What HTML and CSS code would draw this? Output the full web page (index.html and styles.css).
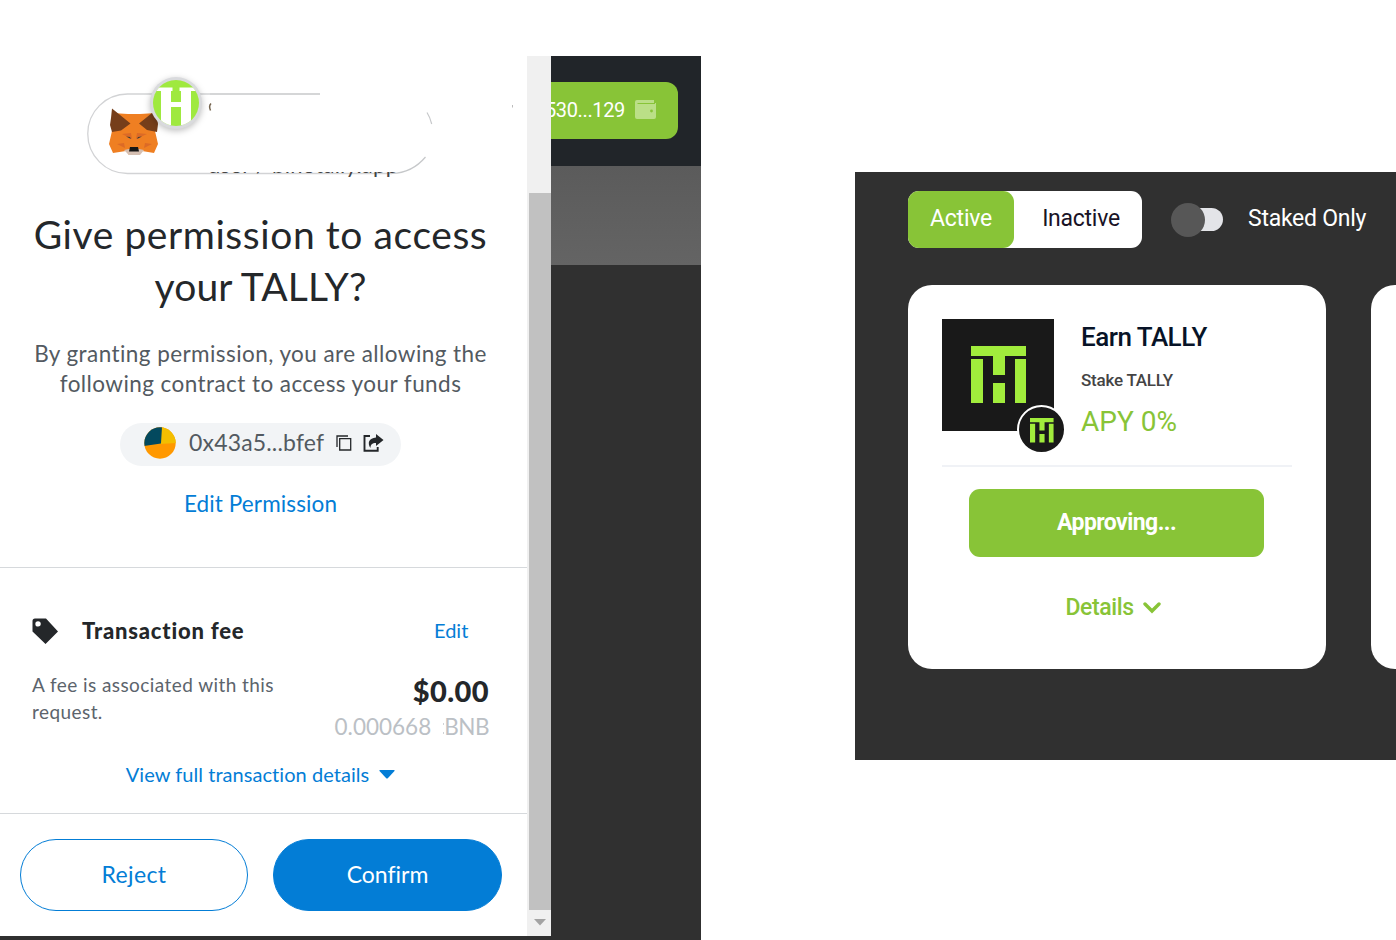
FILE: index.html
```html
<!DOCTYPE html>
<html lang="en">
<head>
<meta charset="utf-8">
<title>Give permission</title>
<link rel="stylesheet" href="styles.css">
</head>
<body>
<svg width="0" height="0" class="defs">
  <symbol id="th" viewBox="0 0 56 58"><path fill="#a1ec3c" d="M0 0h55v10H34v19H22V10H0zM0 13h12v44H0zM44 13h11v44H44zM22 37h12v20H22z"/></symbol>
</svg>
<main class="stage">
  <section class="wallet">
    <div class="popup">
      <div class="content">
        <header class="origin">
          <svg class="pill" width="440" height="110" viewBox="80 70 440 110">
            <path d="M320 94H127.500a39.750 39.750 0 0 0 0 79.500H392" fill="none" stroke="#d2d3d5" stroke-width="1.300"/>
            <path d="M210 94H320" stroke="#d2d3d5" stroke-width="1.600"/>
            <path d="M392 173.500Q412 173 425.500 157M427 112.500Q430 117 431.700 124" fill="none" stroke="#c6c8ca" stroke-width="1.200"/>
            <path d="M211 103.500q-2.500 2.500-.5 7" fill="none" stroke="#73634d" stroke-width="1.500"/>
            <path d="M512.500 105v2.500" stroke="#bbb" stroke-width="1"/>
            <path fill="#ef7f22" d="M112 113l16 1h12l16-1-1 18 3 13-4 9-12-2-3 4h-10l-3-4-13 2-4-9 3-13z"/>
            <path fill="#763e1a" d="M112 108.500l18.500 15-9.500 7-9 1.500-2-7 1-7zM157 109l-18 14.500 8 6.500 10 2 1-8-1-6z"/>
            <path fill="#dc6a26" d="M122 134l9-1 1 6zM147 134l-10-1-1 6zM117 144l7-1 1 5zM152 144l-7-1-1 5z"/>
            <path fill="#d5bfb2" d="M124 150l5-1h10l5 1-4 5h-11z"/>
            <path fill="#161616" d="M130 147h8l1 4.500h-10z"/>
            <path fill="#3b3938" d="M126 136.500l4 .5 1 2zM142 136.500l-4 .5-1 2z"/>
          </svg>
          <svg class="token" width="60" height="60" viewBox="0 0 60 60">
            <circle cx="30" cy="30" r="26" fill="#d9dadd"/>
            <clipPath id="tc"><circle cx="30" cy="30" r="23"/></clipPath>
            <g clip-path="url(#tc)"><path fill="#9fe93f" d="M5 5h50v50H5z"/><path fill="#fff" d="M10 14.500h16.500V18H25v11h10V18h-1.500v-3.500H51V18h-6v34H35V34H25v18H15V18h-5zM5 46l10 4v10H5zM45 50l9-4v14h-9z"/></g>
          </svg>
          <div class="origin-url"><span>user / binotally.app</span></div>
        </header>
        <h1 class="title"><span class="t1">Give permission to access</span><br><span class="t2">your TALLY?</span></h1>
        <p class="desc">By granting permission, you are allowing the<br>following contract to access your funds</p>
        <div class="address">
          <svg width="32" height="32" viewBox="0 0 32 32"><clipPath id="ac"><circle cx="16" cy="16" r="15.700"/></clipPath><g clip-path="url(#ac)"><path fill="#ff9800" d="M0 0h32v32H0z"/><path fill="#f3be00" d="M17 0h15v16l-16 1z"/><path fill="#03495e" d="M0 0h18l-1 16.500L0 19z"/><path fill="#5c6e7c" d="M32 21v11h-6z"/></g></svg>
          <span class="addr-text">0x43a5...bfef</span>
          <svg class="copy" width="16" height="16" viewBox="0 0 16 16" fill="none" stroke="#24272a" stroke-width="1.300"><path d="M1 12V1h11"/><path d="M3.700 3.700h11V15h-11z"/></svg>
          <svg class="share" width="21" height="18" viewBox="0 0 21 18"><path d="M7 2H1.500v14.700h13.200V13" fill="none" stroke="#24272a" stroke-width="1.900"/><path d="M13 0l7.500 6-7.500 6V9c-4 0-5.500 1.500-5.500 5C4 9 6 4 13 3.500z" fill="#24272a"/></svg>
        </div>
        <a class="link edit-perm">Edit Permission</a>
        <section class="fee">
          <div class="fee-head">
            <svg width="27" height="27" viewBox="0 0 27 27"><path fill="#24272a" fill-rule="evenodd" d="M3 .5h11L26 13.500 13.500 26 .5 13.500V3Q.5.500 3 .5zM6 3.200a2.700 2.700 0 1 0 .1 5.400A2.700 2.700 0 0 0 6 3.200z"/></svg>
            <h2>Transaction fee</h2>
            <a class="link">Edit</a>
          </div>
          <div class="fee-body">
            <p>A fee is associated with this<br>request.</p>
            <div class="amounts"><strong>$0.00</strong><span class="crypto"><span>0.000668</span><span class="bnb">BNB</span></span></div>
          </div>
          <a class="link details"><span>View full transaction details</span><svg width="16" height="9" viewBox="0 0 16 9"><path fill="#037dd6" d="M1 0h14q1 0 .5 1L9 8q-1 1-2 0L.5 1Q0 0 1 0z"/></svg></a>
        </section>
        <footer class="actions">
          <button class="btn reject">Reject</button>
          <button class="btn primary">Confirm</button>
        </footer>
      </div>
      <div class="scrollbar"><div class="thumb"></div><svg width="12" height="7" viewBox="0 0 12 7"><path fill="#a3a3a3" d="M0 0h12L6 6.500z"/></svg></div>
    </div>
    <aside class="backdrop">
      <div class="topbar"><div class="account"><span>530...129</span>
        <svg width="21" height="19" viewBox="0 0 21 19"><path fill="#bbdf87" d="M2 0h17v3h2v14q0 2-2 2H2q-2 0-2-2V2Q0 0 2 0z"/><path d="M2.500 3.500H20" stroke="#88c437"/><circle cx="16.500" cy="11" r="1.400" fill="#88c437"/></svg></div></div>
      <div class="band"></div>
    </aside>
  </section>
  <section class="farm">
    <div class="controls">
      <div class="tabs"><span class="tab active">Active</span><span class="tab">Inactive</span></div>
      <div class="switch"></div>
      <span class="staked">Staked Only</span>
    </div>
    <div class="cards">
      <article class="card">
        <div class="card-head">
          <div class="logo"><svg width="56" height="58"><use href="#th"/></svg><div class="badge"><svg width="24" height="25"><use href="#th"/></svg></div></div>
          <div class="info"><h3>Earn TALLY</h3><p>Stake TALLY</p><div class="apy">APY 0%</div></div>
        </div>
        <button class="approve">Approving...</button>
        <a class="more"><span>Details</span><svg width="18" height="12" viewBox="0 0 18 12"><path d="M2 2l7 7 7-7" fill="none" stroke="#88c437" stroke-width="3.400" stroke-linecap="round"/></svg></a>
      </article>
      <article class="card"></article>
    </div>
  </section>
</main>
</body>
</html>
```
FILE: styles.css
```css
* { box-sizing: border-box; }
body { margin: 0; background: #fff; font-family: Lato, sans-serif; font-variant-ligatures: none; color: #24272a; }
h1, h2, h3, p { margin: 0; font-weight: 400; }
button { border: 0; padding: 0; font: inherit; letter-spacing: inherit; }
svg { display: block; flex: none; }
.defs { position: absolute; }
.stage { width: 1396px; height: 940px; display: flex; justify-content: space-between; overflow: hidden; }

.wallet { width: 701px; height: 884px; margin-top: 56px; display: flex; background: #303030; }
.popup { width: 551px; height: 880px; display: flex; background: #fff; }
.content { width: 527px; display: flex; flex-direction: column; }
.origin { height: 152px; position: relative; }
.pill { position: absolute; left: 80px; top: 14px; }
.token { position: absolute; left: 146px; top: 17px; filter: drop-shadow(0 2px 3px rgba(0, 0, 0, .25)); }
.origin-url { position: absolute; left: 208px; top: 116px; width: 200px; height: 7px; overflow: hidden; display: flex; align-items: flex-end; font-size: 22px; line-height: 28px; letter-spacing: .27px; white-space: nowrap; color: #444; }
.title { text-align: center; font-size: 39px; line-height: 52px; width: 521px; white-space: nowrap; }
.t1 { letter-spacing: .58px; }
.t2 { letter-spacing: .15px; }
.desc { text-align: center; font-size: 22.500px; line-height: 30px; letter-spacing: .43px; width: 521px; margin-top: 27px; color: #535a61; white-space: nowrap; }
.address { width: 281px; height: 43px; margin: 24px 0 0 120px; padding-left: 24px; border-radius: 22px; background: #f2f4f6; display: flex; align-items: center; color: #535a61; font-size: 23px; letter-spacing: .17px; white-space: nowrap; }
.address svg { margin-top: -3px; }
.addr-text { width: 147px; padding-left: 13px; line-height: 26px; margin-top: -5px; }
.copy { margin-left: 13px; }
.share { margin-left: 11px; }
.link { color: #037dd6; }
.edit-perm { width: 521px; height: 101px; padding-top: 24px; text-align: center; font-size: 22.500px; line-height: 28px; letter-spacing: .12px; }
.fee { height: 246px; border-top: 1px solid #d6d9dc; padding-top: 49px; }
.fee-head { height: 28px; display: flex; align-items: center; padding-left: 32px; }
.fee-head h2 { width: 352px; padding-left: 23px; font-size: 22px; font-weight: 900; line-height: 28px; letter-spacing: .8px; }
.fee-head .link { margin: -3px 0 0 23px; font-size: 20px; }
.fee-body { display: flex; justify-content: space-between; padding: 26px 38px 0 32px; height: 115px; }
.fee-body p { font-size: 19px; line-height: 27px; letter-spacing: .43px; color: #5c646c; }
.amounts { text-align: right; padding-top: 1px; }
.amounts strong { display: block; font-size: 29px; line-height: 38px; font-weight: 900; letter-spacing: .4px; }
.crypto { display: flex; gap: 13px; font-size: 22.500px; line-height: 34px; color: #bbc0c5; }
.bnb { letter-spacing: -.5px; position: relative; }
/* two faint specks left of the currency code */
.bnb::before { content: ""; position: absolute; left: -1px; top: 13px; width: 1px; height: 11px; background: linear-gradient(#d0d3d6 2px, transparent 2px 9px, #d0d3d6 9px); }
.details { width: 521px; display: flex; justify-content: center; align-items: center; gap: 10px; font-size: 20px; line-height: 28px; letter-spacing: .05px; }
.details svg { margin-top: 1px; }
.actions { height: 123px; border-top: 1px solid #d6d9dc; padding: 25px 0 0 20px; display: flex; gap: 25px; }
.btn { width: 228px; height: 72px; padding-bottom: 2px; border: 1px solid #037dd6; border-radius: 36px; background: #fff; color: #037dd6; font-size: 23px; }
.reject { letter-spacing: .35px; }
.btn.primary { width: 229px; background: #037dd6; color: #fff; }
.scrollbar { width: 24px; background: #f0f0f0; padding: 137px 0 0 2px; }
.thumb { height: 717px; background: #c1c1c1; }
.scrollbar svg { margin: 9px 0 0 5px; }
.backdrop { width: 150px; flex: none; font-family: Roboto, sans-serif; }
.topbar { height: 110px; background: #212529; padding: 26px 23px 0 0; }
.account { width: 127px; height: 57px; background: #88c437; border-radius: 0 12px 12px 0; display: flex; align-items: center; justify-content: flex-end; gap: 10px; padding: 0 22px 2px 0; color: #fff; font-size: 20px; letter-spacing: -.35px; overflow: hidden; }
.band { height: 99px; background: linear-gradient(#5b5b5b, #646464); }

.farm { width: 541px; height: 588px; margin-top: 172px; padding: 19px 0 0 53px; background: #303030; font-family: Roboto, sans-serif; overflow: hidden; }
.controls { display: flex; align-items: center; height: 57px; color: #fff; font-size: 23px; letter-spacing: -.26px; white-space: nowrap; }
.tabs { width: 234px; height: 57px; display: flex; background: #fff; border-radius: 11px; }
.tab { flex: 1; display: flex; align-items: center; justify-content: center; padding-bottom: 2px; color: #191326; padding-left: 6px; }
.tab.active { flex: none; width: 106px; background: #88c437; color: #fff; border-radius: 11px; padding-left: 0; }
.switch { width: 46px; height: 23px; margin-left: 35px; border-radius: 12px; background: #e3e4e8; position: relative; }
.switch::before { content: ""; position: absolute; left: -6px; top: -5px; width: 34px; height: 34px; border-radius: 50%; background: #575757; }
.staked { margin: -2px 0 0 25px; }
.cards { width: 900px; display: flex; gap: 45px; margin-top: 37px; }
.card { width: 418px; height: 384px; padding: 34px; background: #fff; border-radius: 24px; }
.card-head { height: 148px; display: flex; gap: 27px; border-bottom: 2px solid #f0f2f6; }
.logo { width: 112px; height: 112px; background: #191919; position: relative; padding: 27px 0 0 29px; }
.badge { position: absolute; left: 75px; top: 86px; width: 49px; height: 49px; border: 2px solid #fff; border-radius: 50%; background: #191919; padding: 11px 0 0 11px; }
.info { white-space: nowrap; }
.info h3 { font-size: 26px; line-height: 37px; font-weight: 500; letter-spacing: -.5px; color: #071327; }
.info p { font-size: 17px; line-height: 24px; margin-top: 12px; color: #444; font-weight: 500; letter-spacing: -.22px; }
.apy { font-size: 28px; line-height: 36px; margin-top: 12px; color: #88c437; }
.approve { display: block; width: 295px; height: 68px; margin: 22px 0 0 27px; padding-bottom: 1px; background: #88c437; color: #fff; border-radius: 11px; font-size: 23px; font-weight: 700; letter-spacing: -.55px; }
.more { display: flex; justify-content: center; align-items: center; gap: 9px; margin-top: 35px; margin-left: -8px; line-height: 31px; font-size: 23px; font-weight: 500; letter-spacing: -.4px; color: #88c437; }
```
